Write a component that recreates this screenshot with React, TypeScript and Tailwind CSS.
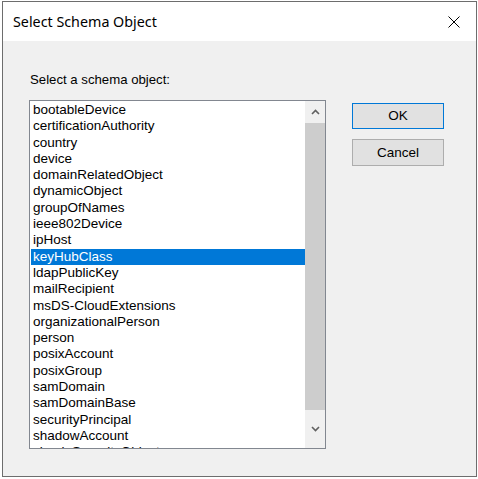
import React from "react";

const items = [
  "bootableDevice",
  "certificationAuthority",
  "country",
  "device",
  "domainRelatedObject",
  "dynamicObject",
  "groupOfNames",
  "ieee802Device",
  "ipHost",
  "keyHubClass",
  "ldapPublicKey",
  "mailRecipient",
  "msDS-CloudExtensions",
  "organizationalPerson",
  "person",
  "posixAccount",
  "posixGroup",
  "samDomain",
  "samDomainBase",
  "securityPrincipal",
  "shadowAccount",
  "simpleSecurityObject",
];

export default function App() {
  return (
    <div className="w-[478px] h-[479px] bg-white overflow-hidden pt-[1px] pl-[2px]">
      <div className="w-[475px] h-[476px] border border-[#6d6d6d] bg-[#f0f0f0] flex flex-col">
        <div className="h-[39px] bg-white flex items-center justify-between pl-[10px] pr-[16px]">
          <span
            className="text-[14.3px] text-black"
            style={{ fontFamily: '"Noto Sans", "Open Sans", sans-serif' }}
          >
            Select Schema Object
          </span>
          <svg width="12" height="12" viewBox="0 0 12 12" className="mt-[1px]">
            <path d="M0.5 0.5 L11.5 11.5 M11.5 0.5 L0.5 11.5" stroke="#000" strokeWidth="1" fill="none" />
          </svg>
        </div>
        <div
          className="flex-1 pl-[26px] pt-[31px] flex flex-col text-[13.5px] text-black"
          style={{ fontFamily: '"Liberation Sans", Arial, sans-serif' }}
        >
          <div className="leading-[16px] h-[28px] pl-[1px] text-[13.2px]">Select a schema object:</div>
          <div className="flex items-start">
            <div className="w-[297px] h-[349px] bg-white border border-[#828790] flex overflow-hidden">
              <div className="flex-1 pl-[1px] pt-[1px] overflow-hidden">
                {items.map((it) => (
                  <div
                    key={it}
                    className={
                      "h-[16.3px] leading-[16.3px] pl-[2px] whitespace-nowrap " +
                      (it === "keyHubClass" ? "bg-[#0078d7] text-white" : "")
                    }
                  >
                    {it}
                  </div>
                ))}
              </div>
              <div className="w-[20px] h-full bg-[#f0f0f0] flex flex-col">
                <div className="h-[22px] flex items-center justify-center">
                  <svg width="9" height="6" viewBox="0 0 9 6">
                    <path d="M1 5 L4.5 1.5 L8 5" stroke="#606060" strokeWidth="1.6" fill="none" />
                  </svg>
                </div>
                <div className="h-[287px] bg-[#cdcdcd]" />
                <div className="flex-1 flex items-center justify-center">
                  <svg width="9" height="6" viewBox="0 0 9 6">
                    <path d="M1 1 L4.5 4.5 L8 1" stroke="#606060" strokeWidth="1.6" fill="none" />
                  </svg>
                </div>
              </div>
            </div>
            <div className="ml-[26px] flex flex-col gap-[10px] mt-[3px]">
              <button className="w-[92px] h-[26px] bg-[#e1e1e1] border border-[#0078d7] text-[13.5px] leading-none">
                OK
              </button>
              <button className="w-[92px] h-[27px] bg-[#e1e1e1] border border-[#adadad] text-[13.5px] leading-none">
                Cancel
              </button>
            </div>
          </div>
        </div>
      </div>
    </div>
  );
}
